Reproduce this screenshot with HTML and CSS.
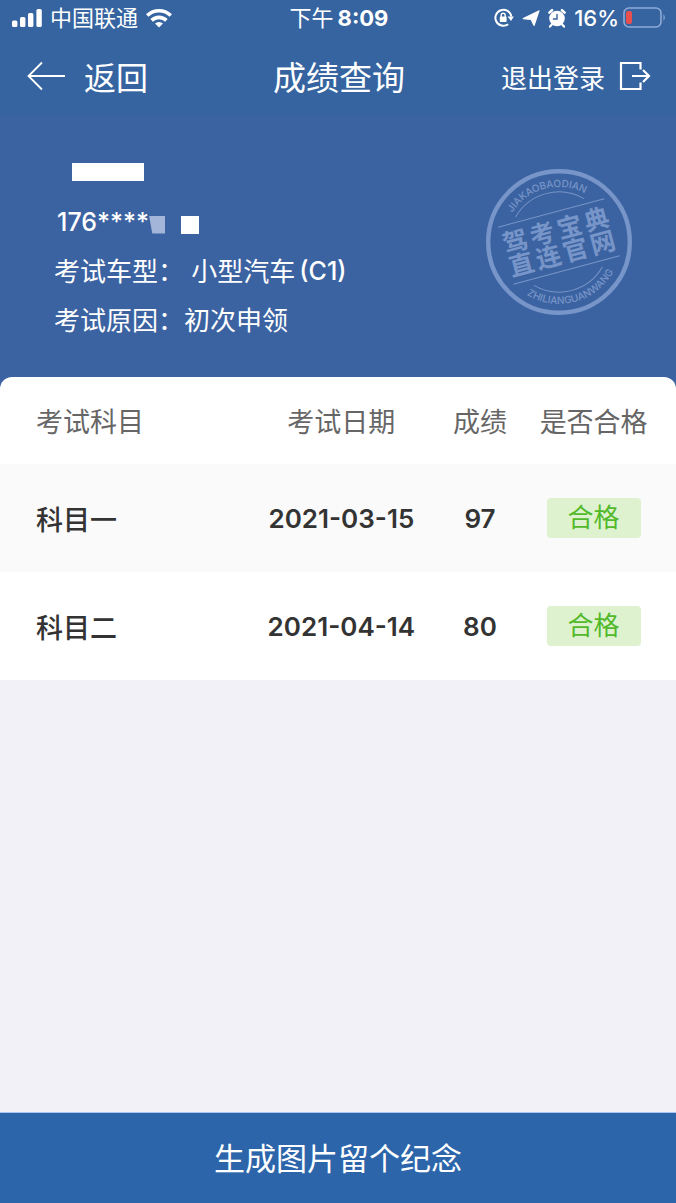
FILE: index.html
```html
<!DOCTYPE html>
<html lang="zh-CN">
<head>
  <meta charset="UTF-8">
  <title>成绩查询</title>
  <meta name="viewport" content="width=device-width, initial-scale=1.0">
  <link rel="stylesheet" href="styles.css">
</head>
<body>
  <header class="top">
    <div class="status-bar">
      <div class="status-left">
        <svg width="30" height="18" viewBox="0 0 30 18" fill="#fff">
          <rect x="0" y="11.5" width="5.4" height="6.5" rx="1.6"/>
          <rect x="8" y="8" width="5.4" height="10" rx="1.6"/>
          <rect x="16" y="4" width="5.4" height="14" rx="1.6"/>
          <rect x="24.4" y="0" width="5.4" height="18" rx="1.6"/>
        </svg>
        <span>中国联通</span>
        <svg width="26" height="20" viewBox="0 0 26 20" fill="none" stroke="#fff" stroke-width="3.6">
          <path d="M1.2 7.5a17 17 0 0 1 23.6 0"/>
          <path d="M5.6 12.4a10.6 10.6 0 0 1 14.8 0"/>
          <path d="M13 19.5l-4-4a5.8 5.8 0 0 1 8 0z" fill="#fff" stroke="none"/>
        </svg>
      </div>
      <div class="status-time">下午<b>8:09</b></div>
      <div class="status-right">
        <!-- rotation lock -->
        <svg width="20" height="20" viewBox="0 0 20 20" fill="none" stroke="#fff">
          <path d="M14.2 16.2A8 8 0 1 1 17.3 8.5" stroke-width="2"/>
          <path d="M13.6 8.6h6.2l-2.8 4.4z" fill="#fff" stroke="none"/>
          <rect x="5.8" y="8.6" width="6.8" height="5.4" rx="0.8" fill="#fff" stroke="none"/>
          <path d="M7.2 9V7.3a2 2 0 0 1 4 0V9" stroke-width="1.4"/>
        </svg>
        <!-- location -->
        <svg width="18" height="18" viewBox="0 0 18 18" fill="#fff">
          <path d="M17 1.2L1 9q-.9.8.2 1.2l7.6.9 2.6 5.4q.7 1 1.3-.1L17.6 1.8q.2-.9-.6-.6z"/>
        </svg>
        <!-- alarm -->
        <svg width="18" height="20" viewBox="0 0 18 20" fill="none" stroke="#fff" stroke-linecap="round">
          <circle cx="9" cy="10.5" r="7.8" fill="#fff" stroke="none"/>
          <path d="M1.4 4.6l2.6-2.4M16.6 4.6l-2.6-2.4" stroke-width="2.6"/>
          <path d="M3.8 16.6l-1.8 2M14.2 16.6l1.8 2" stroke-width="2.2"/>
          <path d="M9 6.4v4.6H5.4" stroke="#3564a0" stroke-width="1.4"/>
        </svg>
        <span class="percent">16%</span>
        <svg width="43" height="22" viewBox="0 0 43 22" fill="none">
          <rect x="1" y="1" width="37" height="19" rx="5" stroke="#8fabd6" stroke-width="1.6"/>
          <rect x="3" y="4" width="6" height="13" rx="2" fill="#e8504f"/>
          <path d="M40.5 7q2.6 3.5 0 7z" fill="#8fabd6"/>
        </svg>
      </div>
    </div>

    <nav class="nav">
      <button type="button" class="nav-btn back">
        <svg width="39" height="30" viewBox="0 0 39 30" fill="none" stroke="#fff" stroke-width="1.8">
          <path d="M15 1.5L1.5 15 15 28.5M1.5 15H38"/>
        </svg>
        返回
      </button>
      <h1>成绩查询</h1>
      <button type="button" class="nav-btn logout">
        退出登录
        <svg width="32" height="30" viewBox="0 0 32 30" fill="none" stroke="#fff" stroke-width="2.2">
          <path d="M21.5 8.5V2H2v26h19.5v-6.5"/>
          <path d="M13 15h16.5M24 9l6 6-6 6"/>
        </svg>
      </button>
    </nav>
  </header>

  <section class="profile">
    <div class="info">
      <p><span class="mask name-mask"></span></p>
      <p class="id-line">176****<span class="mask cut-mask"></span><span class="mask id-mask"></span></p>
      <p>考试车型： 小型汽车<span class="code">(C1)</span></p>
      <p>考试原因：初次申领</p>
    </div>
    <svg class="seal" width="146" height="146" viewBox="0 0 146 146">
      <defs>
        <path id="arcTop" d="M18 73a55 55 0 0 1 110 0"/>
        <path id="arcBottom" d="M11 73a62 62 0 0 0 124 0"/>
      </defs>
      <circle cx="73" cy="73" r="70.8" class="seal-line" stroke-width="4.4"/>
      <g transform="rotate(-15 73 73)">
        <path class="seal-line" d="M37.6 37.6a50 50 0 0 1 70.8 0M37.6 108.4a50 50 0 0 0 70.8 0"/>
        <path class="seal-line" d="M18 43h110M18 102h110"/>
        <text class="seal-small"><textPath href="#arcTop" startOffset="50%">JIAKAOBAODIAN</textPath></text>
        <text class="seal-small"><textPath href="#arcBottom" startOffset="50%">ZHILIANGUANWANG</textPath></text>
        <text class="seal-big" y="70"><tspan x="31">驾</tspan><tspan x="59">考</tspan><tspan x="87">宝</tspan><tspan x="115">典</tspan></text>
        <text class="seal-big" y="94"><tspan x="31">直</tspan><tspan x="59">连</tspan><tspan x="87">官</tspan><tspan x="115">网</tspan></text>
      </g>
    </svg>
  </section>

  <main class="scores">
    <table>
      <thead>
        <tr>
          <th class="subject">考试科目</th>
          <th class="date">考试日期</th>
          <th class="score">成绩</th>
          <th class="result">是否合格</th>
        </tr>
      </thead>
      <tbody>
        <tr>
          <td class="subject">科目一</td>
          <td>2021-03-15</td>
          <td>97</td>
          <td class="result"><span class="tag">合格</span></td>
        </tr>
        <tr>
          <td class="subject">科目二</td>
          <td>2021-04-14</td>
          <td>80</td>
          <td class="result"><span class="tag">合格</span></td>
        </tr>
      </tbody>
    </table>
  </main>

  <button type="button" class="save-btn">生成图片留个纪念</button>
</body>
</html>
```
FILE: styles.css
```css
* {
  box-sizing: border-box;
}

body {
  margin: 0;
  min-height: 100vh;
  display: flex;
  flex-direction: column;
  font-family: Inter, "Noto Sans CJK SC", sans-serif;
  font-size: 26px;
  background: #f1f1f7;
  color: #333;
}

button {
  font-family: inherit;
  color: #fff;
  border: none;
  padding: 0;
  cursor: pointer;
}

svg {
  flex-shrink: 0;
}

/* header */
.top {
  background: #3564a0;
  color: #fff;
}

.status-bar,
.nav {
  display: grid;
  grid-template-columns: 1fr auto 1fr;
  align-items: center;
}

.status-bar {
  height: 36px;
  padding: 0 10px 0 12px;
  font-size: 22px;
  line-height: 36px;
}

.status-left,
.status-right {
  display: flex;
  align-items: center;
  gap: 8px;
}

.status-time b {
  margin-left: 4px;
}

.status-right {
  justify-content: flex-end;
}

.status-right .percent {
  font-weight: 500;
  margin-right: -4px;
}

.nav {
  height: 80px;
  padding: 0 25px 0 27px;
}

.nav h1 {
  margin: 0;
  font-size: 33px;
  font-weight: 400;
}

.nav-btn {
  display: flex;
  align-items: center;
  background: none;
}

.back {
  gap: 18px;
  font-size: 32px;
}

.logout {
  gap: 14px;
  justify-self: end;
  font-size: 26px;
}

/* candidate info */
.profile {
  display: flex;
  justify-content: space-between;
  padding: 33px 44px 44px 54px;
  background: #3c63a1;
  color: #fff;
}

.info p {
  display: flex;
  align-items: center;
  margin: 0;
  height: 49px;
  line-height: 49px;
  white-space: pre;
}

.info .id-line {
  font-size: 25px;
  font-weight: 500;
  padding-left: 3px;
}

.code {
  margin-left: 4px;
  font-size: 25px;
  font-weight: 500;
}

.mask {
  width: 18px;
  height: 18px;
  margin-top: 4px;
  background: #fff;
}

.name-mask {
  width: 72px;
  margin: 0 18px 4px;
}

.cut-mask {
  width: 16px;
  background: #a3b5d8;
  clip-path: polygon(0 0, 100% 0, 100% 100%, 20% 100%);
}

.id-mask {
  margin-left: 16px;
}

.seal {
  margin-top: 20px;
}

.seal-line {
  fill: none;
  stroke: #7795c8;
}

.seal-small,
.seal-big {
  fill: #7795c8;
  text-anchor: middle;
}

.seal-small {
  font-size: 10px;
  font-weight: 500;
}

.seal-big {
  font-size: 25px;
  font-weight: 700;
}

/* score table */
.scores {
  flex: 1;
  margin-top: -12px;
}

table {
  width: 100%;
  table-layout: fixed;
  border-spacing: 0;
  background: #fff;
  border-radius: 12px 12px 0 0;
}

th,
td {
  height: 108px;
  padding: 0;
  text-align: center;
  font-weight: 600;
}

th {
  height: 87px;
  font-size: 27px;
  font-weight: 400;
  color: #666;
}

tbody tr:nth-child(odd) {
  background: #fafafa;
}

.subject {
  width: 37%;
  padding-left: 36px;
  text-align: left;
}

td.subject {
  font-size: 27px;
  font-weight: 500;
}

.date {
  width: 27%;
}

.score {
  width: 14%;
}

.result {
  padding-right: 16px;
}

.tag {
  display: inline-block;
  width: 94px;
  line-height: 40px;
  border-radius: 4px;
  background: #def2d0;
  color: #52b92b;
  font-weight: 400;
}

.save-btn {
  height: 91px;
  padding-bottom: 4px;
  border-top: 1px solid #a9c6ee;
  background: #2c65aa;
  font-size: 31px;
}
```
